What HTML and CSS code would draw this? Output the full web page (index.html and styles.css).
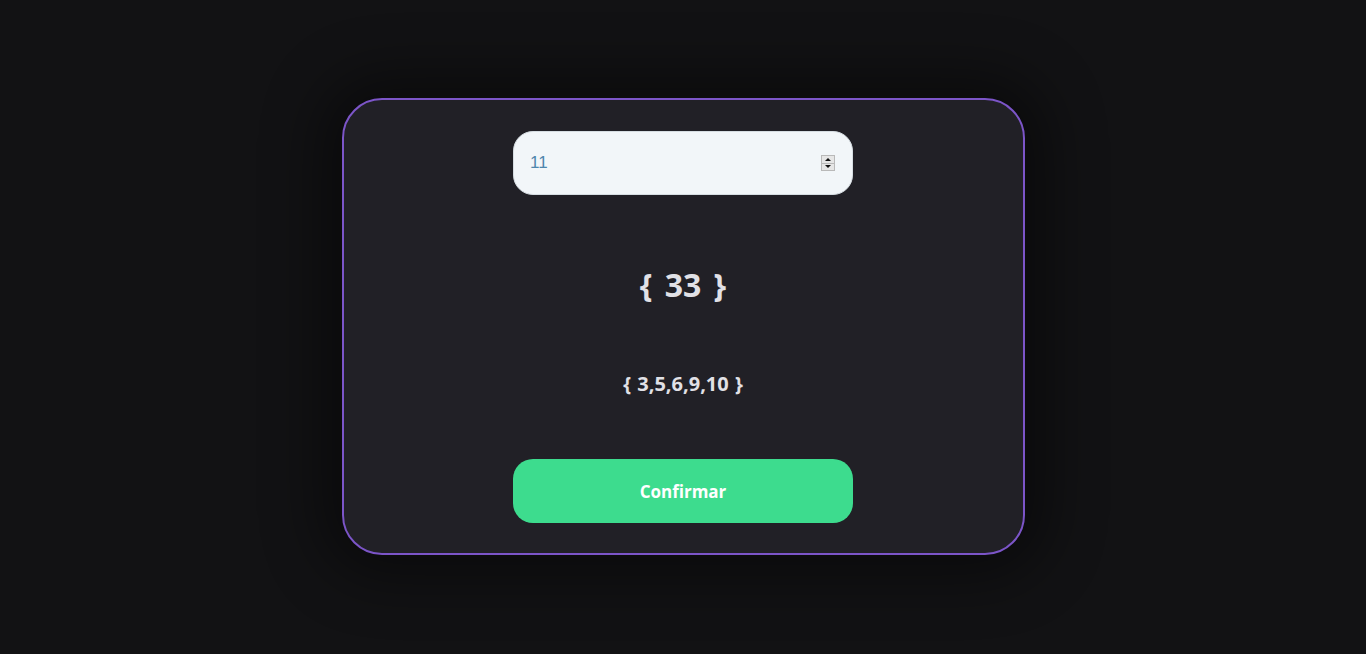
FILE: index.html
```html
<!DOCTYPE html>
<html lang="pt-BR">
<head>
<meta charset="utf-8">
<title>Soma</title>
<link rel="stylesheet" href="styles.css">
</head>
<body>
<main class="page">
  <section class="card">
    <div class="field">
      <input class="num-input" type="number" value="11">
      <span class="spin" aria-hidden="true">
        <span class="spin-btn"><span class="arrow up"></span></span>
        <span class="spin-btn"><span class="arrow down"></span></span>
      </span>
    </div>
    <h1 class="total">{ 33 }</h1>
    <p class="list">{ 3,5,6,9,10 }</p>
    <button class="confirm" type="button">Confirmar</button>
  </section>
</main>
</body>
</html>
```
FILE: styles.css
```css
* { box-sizing: border-box; }
html, body { margin: 0; height: 100%; }
body {
  background: #121214;
  font-family: "Open Sans", "Noto Sans", sans-serif;
  color: #e1e1e6;
}
.page {
  height: 100%;
  display: flex;
  align-items: flex-start;
  justify-content: center;
  padding-top: 98px;
}
.card {
  width: 683px;
  height: 457px;
  background: #212026;
  border: 2px solid #7c55c8;
  border-radius: 40px;
  box-shadow: 0 0 60px 20px rgba(0,0,0,0.45);
  display: flex;
  flex-direction: column;
  align-items: center;
  padding-top: 31px;
  gap: 60px;
}
.field {
  position: relative;
  width: 340px;
  height: 64px;
}
.num-input {
  width: 100%;
  height: 100%;
  border-radius: 20px;
  border: 1px solid #d6dde2;
  background: #f2f6f9;
  padding: 0 16px;
  font-family: "Liberation Sans", Arial, sans-serif;
  font-size: 17px;
  font-weight: 400;
  color: #4f86ad;
  outline: none;
  -moz-appearance: textfield;
}
.num-input::-webkit-inner-spin-button,
.num-input::-webkit-outer-spin-button {
  -webkit-appearance: none;
  margin: 0;
}
.spin {
  position: absolute;
  left: 308px;
  top: 24px;
  width: 14px;
  height: 16px;
  display: flex;
  flex-direction: column;
  border: 1px solid #b9b9b9;
  background: #e6e6e6;
}
.spin-btn {
  flex: 1;
  display: flex;
  align-items: center;
  justify-content: center;
}
.spin-btn + .spin-btn { border-top: 1px solid #b9b9b9; }
.arrow {
  width: 0;
  height: 0;
  border-left: 3px solid transparent;
  border-right: 3px solid transparent;
}
.arrow.up { border-bottom: 3px solid #111; }
.arrow.down { border-top: 3px solid #111; }
.total {
  margin: 6px 0 0;
  font-size: 32px;
  line-height: 48px;
  font-weight: 700;
  word-spacing: 4px;
  color: #e1e1e6;
}
.list {
  margin: 0;
  font-size: 20px;
  line-height: 30px;
  font-weight: 700;
  word-spacing: 1px;
  color: #e1e1e6;
}
.confirm {
  width: 340px;
  height: 64px;
  border: none;
  border-radius: 20px;
  background: #3ddc8e;
  color: #ffffff;
  font-family: inherit;
  font-size: 17px;
  font-weight: 700;
  cursor: pointer;
}
```
